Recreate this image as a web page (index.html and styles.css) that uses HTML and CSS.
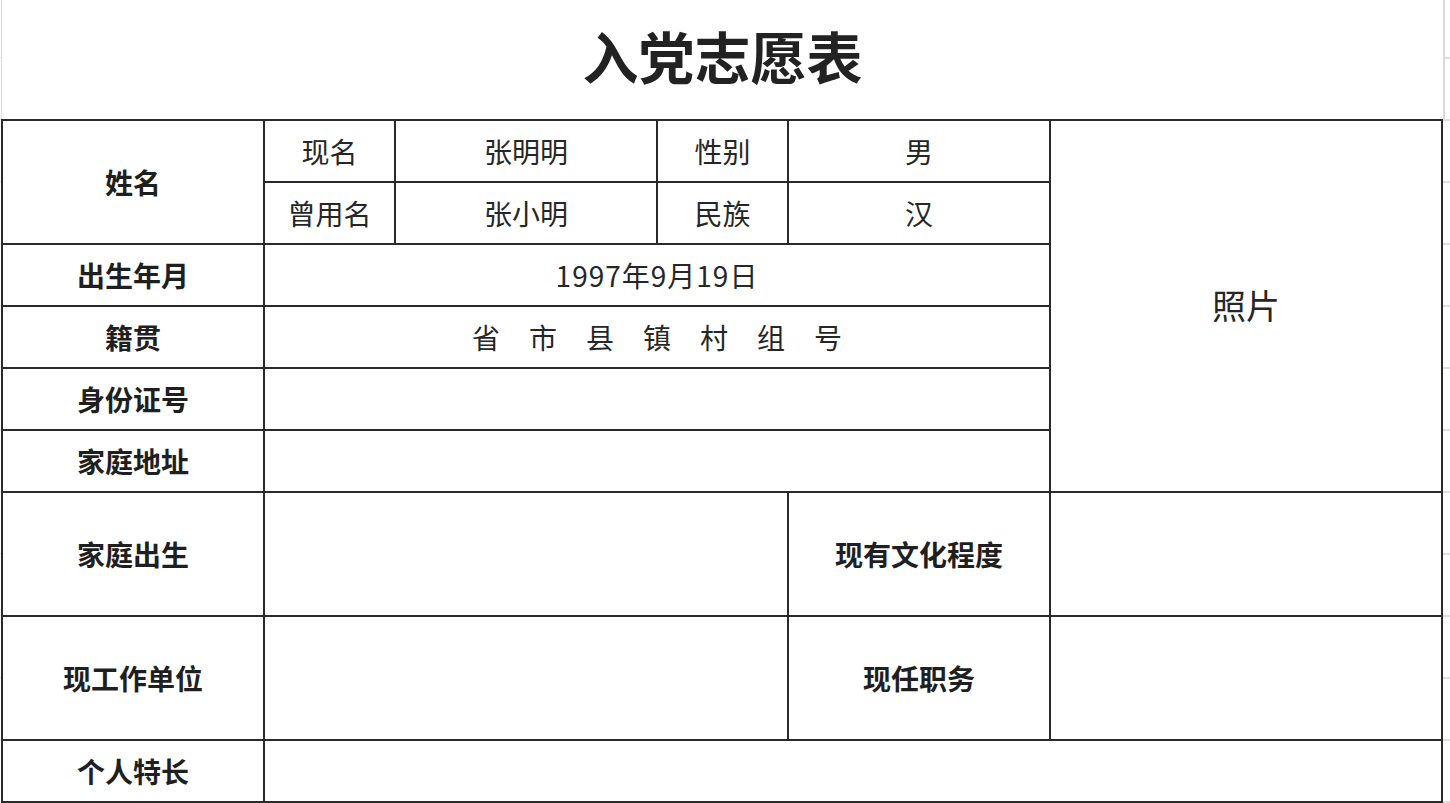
FILE: index.html
```html
<!DOCTYPE html>
<html lang="zh-CN">
<head>
<meta charset="utf-8">
<title>入党志愿表</title>
<link rel="stylesheet" href="styles.css">
</head>
<body>
<div class="page">
  <div class="edge edge-left"></div>
  <div class="sheet">
    <div class="title-row"><h1 class="title">入党志愿表</h1></div>
    <div class="form">
      <div class="cell label name-label">姓名</div>
      <div class="cell">现名</div>
      <div class="cell">张明明</div>
      <div class="cell">性别</div>
      <div class="cell">男</div>
      <div class="cell photo">照片</div>

      <div class="cell">曾用名</div>
      <div class="cell">张小明</div>
      <div class="cell">民族</div>
      <div class="cell">汉</div>

      <div class="cell label">出生年月</div>
      <div class="cell span4 date">1997年9月19日</div>

      <div class="cell label">籍贯</div>
      <div class="cell span4 spaced"><span>省</span><span>市</span><span>县</span><span>镇</span><span>村</span><span>组</span><span>号</span></div>

      <div class="cell label">身份证号</div>
      <div class="cell span4"></div>

      <div class="cell label">家庭地址</div>
      <div class="cell span4"></div>

      <div class="cell label tall">家庭出生</div>
      <div class="cell span3 tall"></div>
      <div class="cell label tall">现有文化程度</div>
      <div class="cell tall"></div>

      <div class="cell label tall">现工作单位</div>
      <div class="cell span3 tall"></div>
      <div class="cell label tall">现任职务</div>
      <div class="cell tall"></div>

      <div class="cell label">个人特长</div>
      <div class="cell span5"></div>
    </div>
  </div>
  <div class="edge edge-right"></div>
</div>
</body>
</html>
```

FILE: styles.css
```css
html, body {
  margin: 0;
  padding: 0;
  background: #ffffff;
}

body {
  font-family: "Noto Sans CJK SC", "Noto Sans", sans-serif;
  color: #262626;
  overflow: hidden;
}

.page {
  display: flex;
  height: 803px;
}

.edge-left {
  width: 1px;
  flex: none;
  background-image: repeating-linear-gradient(to bottom, transparent 0, transparent 57px, #e2e2e2 57px, #e2e2e2 58px, transparent 58px, transparent 62px);
}

.edge-right {
  flex: 1;
  background-image: repeating-linear-gradient(to bottom, transparent 0, transparent 57px, #dedede 57px, #dedede 59px, transparent 59px, transparent 62px);
}

.sheet {
  width: 1442px;
  flex: none;
  display: flex;
  flex-direction: column;
}

.title-row {
  height: 119px;
  box-sizing: border-box;
  border-left: 1px solid #dadada;
  border-right: 2px solid #dadada;
  margin-right: -2px;
  display: flex;
  align-items: center;
  justify-content: center;
}

.title {
  margin: 0;
  font-size: 56px;
  font-weight: 700;
  line-height: 1;
  color: #222222;
  padding-bottom: 10px;
}

.form {
  display: grid;
  grid-template-columns: 260px 129px 260px 129px 260px 390px;
  grid-auto-rows: 60px;
  gap: 2px;
  padding: 2px;
  background: #2a2a2a;
  width: 1442px;
  box-sizing: border-box;
}

.cell {
  background: #ffffff;
  display: flex;
  align-items: center;
  justify-content: center;
  font-size: 28px;
  line-height: 1;
  color: #262626;
}

.label {
  font-weight: 700;
  color: #1f1f1f;
}

.name-label {
  grid-row: span 2;
}

.photo {
  grid-row: span 6;
  font-size: 34px;
  padding-bottom: 2px;
}

.date {
  letter-spacing: 1px;
}

.span3 { grid-column: span 3; }
.span4 { grid-column: span 4; }
.span5 { grid-column: span 5; }

.tall {
  grid-row: span 2;
}

.spaced {
  gap: 29px;
}
```
